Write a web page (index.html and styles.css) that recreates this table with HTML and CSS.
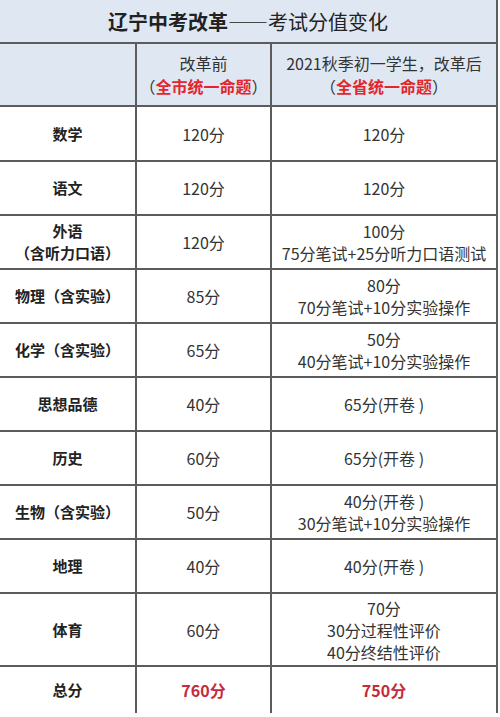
FILE: index.html
```html
<!DOCTYPE html>
<html lang="zh-CN">
<head>
<meta charset="utf-8">
<title>辽宁中考改革——考试分值变化</title>
<link rel="stylesheet" href="styles.css">
</head>
<body>
<div class="sheet">
  <div class="title"><b>辽宁中考改革</b>——考试分值变化</div>
  <div class="grid">
    <div class="cell head"></div>
    <div class="cell head"><span>改革前</span><span>（<em class="hl">全市统一命题</em>）</span></div>
    <div class="cell head last"><span>2021秋季初一学生，改革后</span><span>（<em class="hl">全省统一命题</em>）</span></div>

    <div class="cell label">数学</div>
    <div class="cell">120分</div>
    <div class="cell last">120分</div>

    <div class="cell label">语文</div>
    <div class="cell">120分</div>
    <div class="cell last">120分</div>

    <div class="cell label"><span>外语</span><span>（含听力口语）</span></div>
    <div class="cell">120分</div>
    <div class="cell last"><span>100分</span><span>75分笔试+25分听力口语测试</span></div>

    <div class="cell label">物理（含实验）</div>
    <div class="cell">85分</div>
    <div class="cell last"><span>80分</span><span>70分笔试+10分实验操作</span></div>

    <div class="cell label">化学（含实验）</div>
    <div class="cell">65分</div>
    <div class="cell last"><span>50分</span><span>40分笔试+10分实验操作</span></div>

    <div class="cell label">思想品德</div>
    <div class="cell">40分</div>
    <div class="cell last">65分(开卷 )</div>

    <div class="cell label">历史</div>
    <div class="cell">60分</div>
    <div class="cell last">65分(开卷 )</div>

    <div class="cell label">生物（含实验）</div>
    <div class="cell">50分</div>
    <div class="cell last"><span>40分(开卷 )</span><span>30分笔试+10分实验操作</span></div>

    <div class="cell label">地理</div>
    <div class="cell">40分</div>
    <div class="cell last">40分(开卷 )</div>

    <div class="cell label">体育</div>
    <div class="cell">60分</div>
    <div class="cell last"><span>70分</span><span>30分过程性评价</span><span>40分终结性评价</span></div>

    <div class="cell label bottom">总分</div>
    <div class="cell bottom total">760分</div>
    <div class="cell last bottom total">750分</div>
  </div>
</div>
</body>
</html>
```

FILE: styles.css
```css
html, body {
  margin: 0;
  padding: 0;
  background: #ffffff;
}

body {
  font-family: "Noto Sans CJK SC", "Noto Sans", "Liberation Sans", sans-serif;
  color: #2b2b2b;
}

.sheet {
  width: 498px;
  box-sizing: border-box;
  border-right: 2px solid #5c5c5c;
}

.title {
  height: 44px;
  box-sizing: border-box;
  border-bottom: 2px solid #5c5c5c;
  background: #dfe8f2;
  display: flex;
  align-items: center;
  justify-content: center;
  font-size: 20px;
  color: #222;
  letter-spacing: 0;
}

.title b {
  font-weight: 700;
}

.grid {
  display: grid;
  grid-template-columns: 137px 135px 1fr;
  grid-template-rows: 63px 55px repeat(8, 54px) 73px 46px;
}

.cell {
  box-sizing: border-box;
  border-right: 2px solid #5c5c5c;
  border-bottom: 2px solid #5c5c5c;
  display: flex;
  flex-direction: column;
  align-items: center;
  justify-content: center;
  text-align: center;
  font-size: 16px;
  line-height: 22px;
  color: #333;
  white-space: nowrap;
}

.cell.last {
  border-right: none;
}

.cell.bottom {
  border-bottom: none;
}

.head {
  background: #dfe8f2;
  line-height: 23px;
  padding-top: 1px;
}

.hl {
  font-style: normal;
  font-weight: 700;
  color: #e3262e;
}

.label {
  font-size: 15px;
  font-weight: 700;
  color: #222;
}

.total {
  font-weight: 700;
  color: #c52b3b;
}
```
